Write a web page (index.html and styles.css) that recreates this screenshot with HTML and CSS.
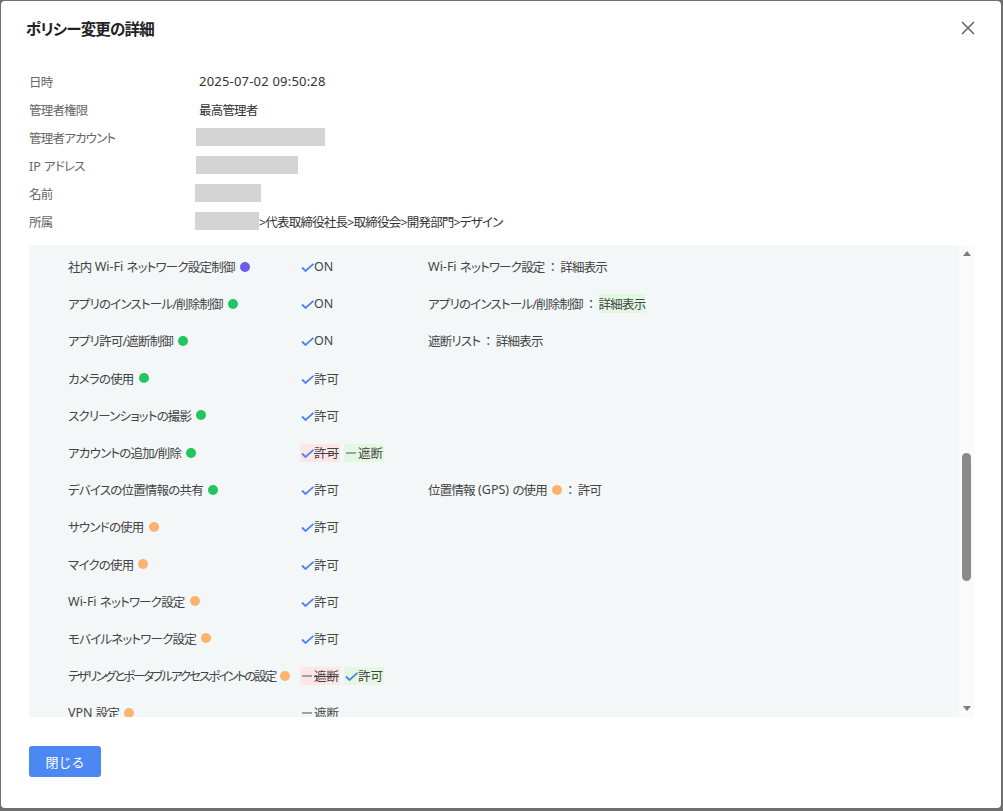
FILE: index.html
```html
<!DOCTYPE html>
<html lang="ja">
<head>
    <meta charset="UTF-8">
    <title>ポリシー変更の詳細</title>
    <link rel="stylesheet" href="styles.css">
</head>
<body>

<div class="dialog">
    <!-- Header -->
    <div class="dialog-header">
        <h1>ポリシー変更の詳細</h1>
        <button class="close-btn" aria-label="close">
            <svg width="16" height="16" viewBox="0 0 16 16"><path d="M2 2 L14 14 M14 2 L2 14" stroke="#666" stroke-width="1.6" fill="none"/></svg>
        </button>
    </div>

    <!-- Info -->
    <div class="info">
        <div class="info-row"><span class="info-label">日時</span><span class="info-value num">2025-07-02 09:50:28</span></div>
        <div class="info-row"><span class="info-label">管理者権限</span><span class="info-value">最高管理者</span></div>
        <div class="info-row"><span class="info-label">管理者アカウント</span><span class="info-value"><span class="redact" style="width:129px"></span></span></div>
        <div class="info-row"><span class="info-label"><span class="latin">IP </span>アドレス</span><span class="info-value"><span class="redact" style="width:102px"></span></span></div>
        <div class="info-row"><span class="info-label">名前</span><span class="info-value shift"><span class="redact" style="width:66px"></span></span></div>
        <div class="info-row"><span class="info-label">所属</span><span class="info-value shift"><span class="redact" style="width:64px"></span>&gt;代表取締役社長&gt;取締役会&gt;開発部門&gt;デザイン</span></div>
    </div>

    <!-- Policy list -->
    <div class="list-box">
        <div class="list">
            <div class="row">
                <div class="col-name">社内<span class="latin"> Wi-Fi </span>ネットワーク設定制御<i class="dot purple"></i></div>
                <div class="col-status"><span class="st"><i class="chk"></i>ON</span></div>
                <div class="col-detail"><span class="latin">Wi-Fi </span>ネットワーク設定<span class="sep">：</span>詳細表示</div>
            </div>
            <div class="row">
                <div class="col-name">アプリのインストール/削除制御<i class="dot green"></i></div>
                <div class="col-status"><span class="st"><i class="chk"></i>ON</span></div>
                <div class="col-detail">アプリのインストール/削除制御<span class="sep">：</span><span class="added">詳細表示</span></div>
            </div>
            <div class="row">
                <div class="col-name">アプリ許可/遮断制御<i class="dot green"></i></div>
                <div class="col-status"><span class="st"><i class="chk"></i>ON</span></div>
                <div class="col-detail">遮断リスト<span class="sep">：</span>詳細表示</div>
            </div>
            <div class="row">
                <div class="col-name">カメラの使用<i class="dot green"></i></div>
                <div class="col-status"><span class="st"><i class="chk"></i>許可</span></div>
                <div class="col-detail"></div>
            </div>
            <div class="row">
                <div class="col-name">スクリーンショットの撮影<i class="dot green"></i></div>
                <div class="col-status"><span class="st"><i class="chk"></i>許可</span></div>
                <div class="col-detail"></div>
            </div>
            <div class="row">
                <div class="col-name">アカウントの追加/削除<i class="dot green"></i></div>
                <div class="col-status"><span class="st removed"><i class="chk"></i>許可</span><span class="st added"><i class="dash"></i>遮断</span></div>
                <div class="col-detail"></div>
            </div>
            <div class="row">
                <div class="col-name">デバイスの位置情報の共有<i class="dot green"></i></div>
                <div class="col-status"><span class="st"><i class="chk"></i>許可</span></div>
                <div class="col-detail">位置情報<span class="latin"> (GPS) </span>の使用<i class="dot orange"></i><span class="sep">：</span>許可</div>
            </div>
            <div class="row">
                <div class="col-name">サウンドの使用<i class="dot orange"></i></div>
                <div class="col-status"><span class="st"><i class="chk"></i>許可</span></div>
                <div class="col-detail"></div>
            </div>
            <div class="row">
                <div class="col-name">マイクの使用<i class="dot orange"></i></div>
                <div class="col-status"><span class="st"><i class="chk"></i>許可</span></div>
                <div class="col-detail"></div>
            </div>
            <div class="row">
                <div class="col-name"><span class="latin">Wi-Fi </span>ネットワーク設定<i class="dot orange"></i></div>
                <div class="col-status"><span class="st"><i class="chk"></i>許可</span></div>
                <div class="col-detail"></div>
            </div>
            <div class="row">
                <div class="col-name">モバイルネットワーク設定<i class="dot orange"></i></div>
                <div class="col-status"><span class="st"><i class="chk"></i>許可</span></div>
                <div class="col-detail"></div>
            </div>
            <div class="row">
                <div class="col-name"><span class="tight">テザリングとポータブルアクセスポイントの設定</span><i class="dot orange"></i></div>
                <div class="col-status"><span class="st removed"><i class="dash"></i>遮断</span><span class="st added"><i class="chk"></i>許可</span></div>
                <div class="col-detail"></div>
            </div>
            <div class="row">
                <div class="col-name"><span class="latin">VPN </span>設定<i class="dot orange"></i></div>
                <div class="col-status"><span class="st"><i class="dash"></i>遮断</span></div>
                <div class="col-detail"></div>
            </div>
        </div>
        <!-- scrollbar -->
        <div class="scrollbar">
            <span class="arrow up"></span>
            <div class="track"><div class="thumb"></div></div>
            <span class="arrow down"></span>
        </div>
    </div>

    <div class="footer">
        <button class="btn-primary">閉じる</button>
    </div>
</div>

</body>
</html>
```

FILE: styles.css
```css
* {
    margin: 0;
    padding: 0;
    box-sizing: border-box;
}
html, body {
    height: 100%;
}
body {
    font-family: "Noto Sans", "Noto Sans CJK JP", sans-serif;
    font-feature-settings: "palt";
    font-size: 12.5px;
    letter-spacing: -0.8px;
    color: #333;
    background-color: #6f6f6f;
    padding: 1px 2px 3px 1px;
}
.dialog {
    height: 100%;
    background-color: #fff;
    border-radius: 4px;
    display: flex;
    flex-direction: column;
    padding: 0 27px 0 28px;
}
.dialog-header {
    display: flex;
    justify-content: space-between;
    align-items: center;
    height: 54px;
}
.dialog-header h1 {
    font-size: 15.5px;
    font-weight: bold;
    color: #222;
    margin-left: -3px;
}
.close-btn {
    background: none;
    border: none;
    cursor: pointer;
    display: flex;
    margin-right: -2px;
}
.info {
    padding-top: 12px;
}
.info-row {
    display: flex;
    align-items: center;
    height: 28px;
}
.info-label {
    width: 170px;
    color: #666;
    white-space: pre;
}
.info-value {
    display: flex;
    align-items: center;
    color: #333;
}
.info-value.num {
    font-size: 13px;
    letter-spacing: 0.2px;
}
.info-value.shift {
    margin-left: -1px;
}
.redact {
    display: inline-block;
    height: 18px;
    background-color: #d4d4d4;
    margin-left: -3px;
}
.list-box {
    margin-top: 10px;
    height: 472px;
    display: flex;
    background-color: #f3f7f8;
}
.list {
    flex: 1;
    overflow: hidden;
    padding: 3px 0 0 39px;
}
.row {
    display: flex;
    align-items: center;
    height: 37.2px;
    color: #444;
    white-space: nowrap;
}
.col-name {
    width: 232px;
    flex-shrink: 0;
    display: flex;
    align-items: center;
}
.col-name, .col-detail {
    white-space: pre;
}
.latin {
    letter-spacing: 0;
}
.tight {
    letter-spacing: -2px;
}
.col-status {
    width: 128px;
    flex-shrink: 0;
    display: flex;
    align-items: center;
    gap: 4px;
}
.col-detail {
    display: flex;
    align-items: center;
}
.sep {
    font-feature-settings: normal;
    margin: 0 2px;
}
.dot {
    display: inline-block;
    flex-shrink: 0;
    width: 10px;
    height: 10px;
    border-radius: 50%;
    margin-left: 5px;
}
.dot.purple { background-color: #6c5ce7; }
.dot.green { background-color: #22c55e; }
.dot.orange { background-color: #fdb36d; }
.st {
    display: inline-flex;
    align-items: center;
    height: 18px;
    letter-spacing: 0;
}
.st.removed {
    background-color: #fde6e6;
    text-decoration: line-through;
    padding-right: 1px;
}
.st.added {
    background-color: #e4f7e2;
    padding-right: 1px;
}
.added {
    background-color: #e4f7e2;
}
.chk {
    display: inline-block;
    width: 13px;
    height: 9px;
    margin: 2px 0 0 1px;
    background: no-repeat url("data:image/svg+xml,%3Csvg xmlns='http://www.w3.org/2000/svg' width='13' height='9' viewBox='0 0 13 9'%3E%3Cpath d='M1 4.5 L4.5 8 L12.5 0.8' stroke='%234a84f2' stroke-width='1.8' fill='none'/%3E%3C/svg%3E");
}
.dash {
    display: inline-block;
    width: 10px;
    height: 2px;
    background-color: #9aa3ad;
    margin: 0 2px 0 2px;
}
.scrollbar {
    width: 15px;
    background-color: #fafafa;
    display: flex;
    flex-direction: column;
    align-items: center;
}
.arrow {
    width: 0;
    height: 0;
    border-left: 4.5px solid transparent;
    border-right: 4.5px solid transparent;
    margin: 6px 0;
}
.arrow.up {
    border-bottom: 5px solid #7d7d7d;
}
.arrow.down {
    border-top: 5px solid #7d7d7d;
}
.track {
    flex: 1;
    width: 100%;
    display: flex;
    justify-content: center;
}
.thumb {
    width: 9px;
    height: 128px;
    margin-top: 191px;
    background-color: #8a8a8a;
    border-radius: 5px;
}
.footer {
    padding-top: 29px;
}
.btn-primary {
    background-color: #4b88f2;
    color: #fff;
    border: none;
    border-radius: 3px;
    width: 72px;
    height: 31px;
    font-family: inherit;
    font-size: 13px;
    cursor: pointer;
}
```
